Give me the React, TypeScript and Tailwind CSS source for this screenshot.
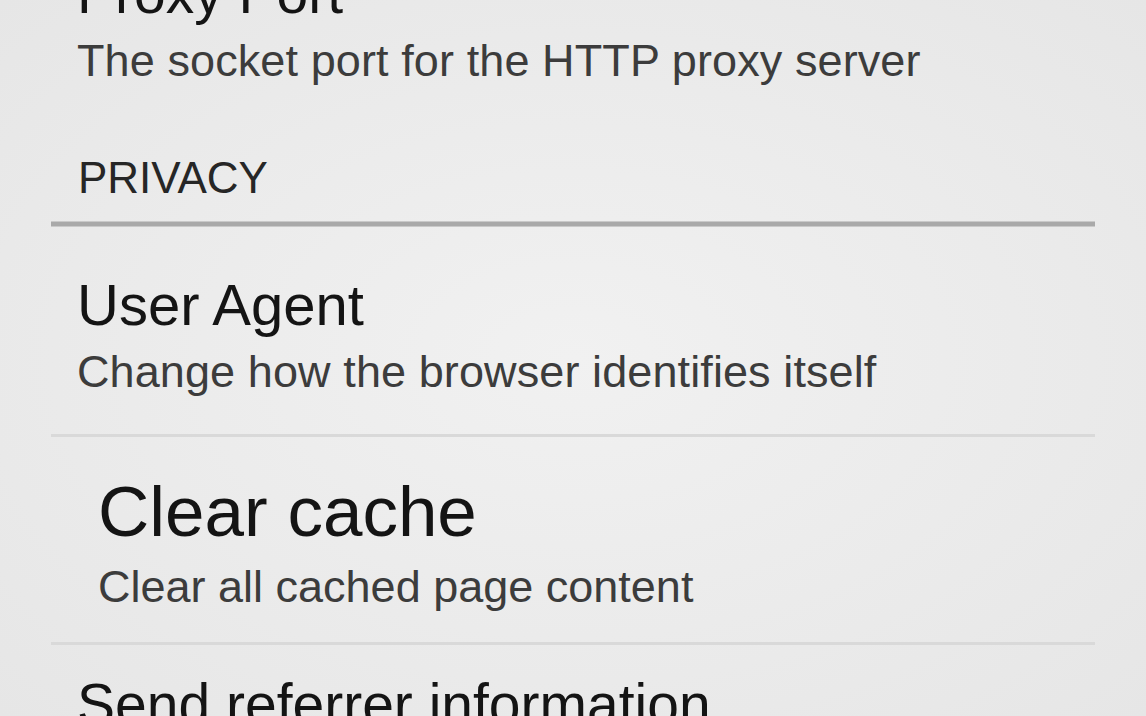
const font = { fontFamily: '"Liberation Sans", Arial, sans-serif' }

function Divider({ thick }: { thick?: boolean }) {
  if (thick) {
    return <div className="h-[6px] bg-[#a9a9a9] border-y border-[#c9c9c9]" />
  }
  return <div className="h-[3px] bg-[#d9d9d9]" />
}

export default function App() {
  return (
    <div
      className="h-[716px] w-full overflow-hidden bg-[radial-gradient(ellipse_at_center,#f1f1f1_0%,#ebebeb_55%,#e6e6e6_100%)]"
      style={font}
    >
      <div className="-mt-[39px] px-[51px]">
        {/* Proxy Port */}
        <div className="pl-[26px]">
          <div className="text-[57px] leading-[64px] text-[#141414]">Proxy Port</div>
          <div className="mt-[10px] text-[45px] leading-[52px] text-[#3c3c3c] tracking-[0.1px]">
            The socket port for the HTTP proxy server
          </div>
        </div>

        {/* section header */}
        <div className="pl-[27px] pt-[67px] pb-[19px] text-[44px] leading-[48px] text-[#262626]">
          PRIVACY
        </div>
        <Divider thick />

        {/* User Agent */}
        <div className="pl-[26px] pt-[46px] pb-[36px]">
          <div className="text-[58px] leading-[64px] text-[#141414]">User Agent</div>
          <div className="mt-[9px] text-[45px] leading-[52px] text-[#3c3c3c] tracking-[0.1px]">
            Change how the browser identifies itself
          </div>
        </div>
        <Divider />

        {/* Clear cache */}
        <div className="pl-[47px] pt-[36px] pb-[29px]">
          <div className="text-[71px] leading-[78px] text-[#141414]">Clear cache</div>
          <div className="mt-[10px] text-[45px] leading-[52px] text-[#3c3c3c]">
            Clear all cached page content
          </div>
        </div>
        <Divider />

        {/* Send referrer */}
        <div className="pl-[26px] pt-[27px]">
          <div className="text-[57px] leading-[64px] text-[#141414]">Send referrer information</div>
        </div>
      </div>
    </div>
  )
}
